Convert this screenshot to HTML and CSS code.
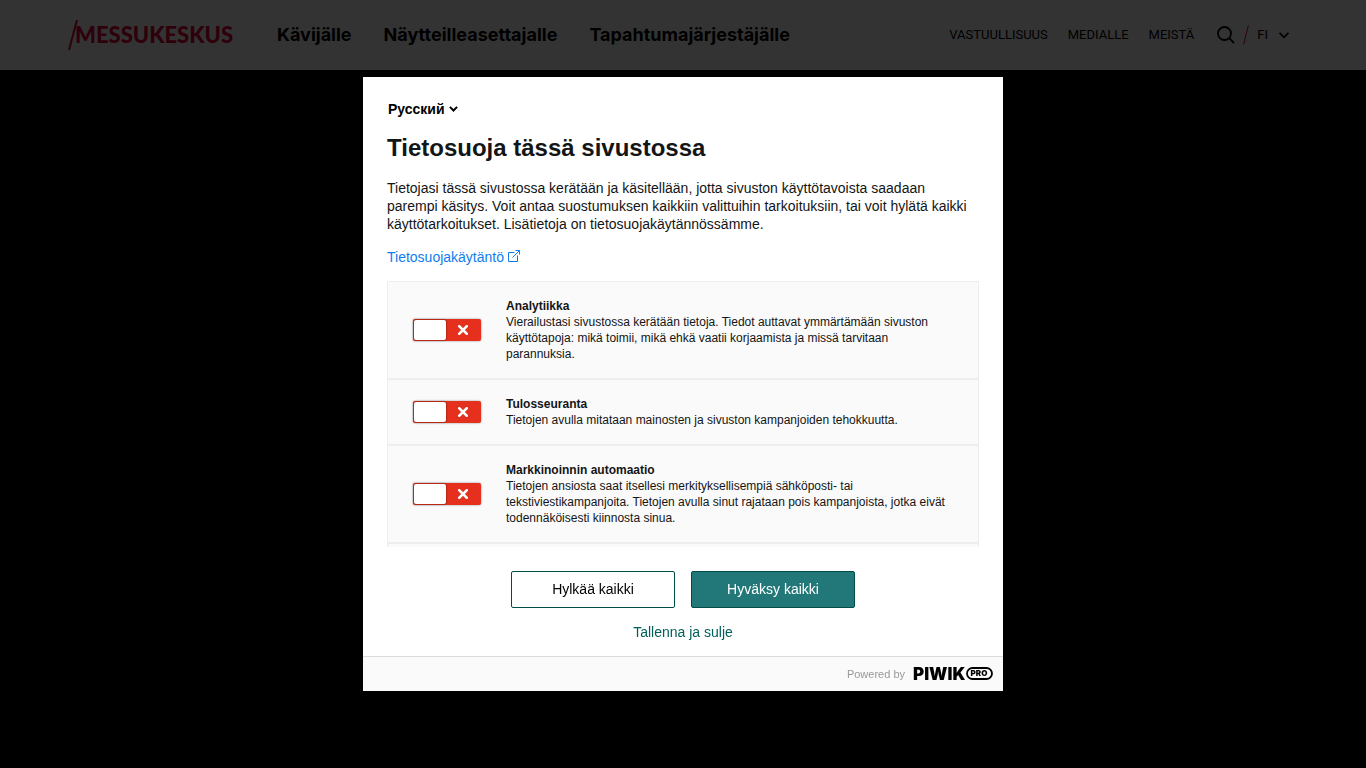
FILE: index.html
```
<!DOCTYPE html>
<html lang="fi">
<head>
    <meta charset="UTF-8">
    <meta name="viewport" content="width=device-width, initial-scale=1.0">
    <title>Messukeskus</title>
    <link rel="stylesheet" href="styles.css">
</head>
<body>

<header class="site-header">
    <a class="logo" href="#" aria-label="Messukeskus">
        <svg width="170" height="32" viewBox="0 0 170 32">
            <path d="M1 31 L9 1" stroke="currentColor" stroke-width="2" fill="none"/>
            <text class="logo-text" x="7" y="24">MESSUKESKUS</text>
        </svg>
    </a>
    <nav class="main-nav">
        <a href="#">Kävijälle</a>
        <a href="#">Näytteilleasettajalle</a>
        <a href="#">Tapahtumajärjestäjälle</a>
    </nav>
    <nav class="side-nav">
        <a href="#">VASTUULLISUUS</a>
        <a href="#">MEDIALLE</a>
        <a href="#">MEISTÄ</a>
    </nav>
    <div class="header-tools">
        <button class="icon-button" aria-label="Haku">
            <svg width="18" height="18" viewBox="0 0 18 18" fill="none" stroke="currentColor" stroke-width="1.8">
                <circle cx="7.5" cy="7.5" r="6.5"/>
                <path d="M12.2 12.2 L17 17"/>
            </svg>
        </button>
        <svg class="slash" width="6" height="20" viewBox="0 0 6 20" fill="none" stroke="currentColor">
            <path d="M0.7 19.5 L5.3 0.5"/>
        </svg>
        <button class="lang-button">
            FI
            <svg width="10" height="7" viewBox="0 0 10 7" fill="none" stroke="currentColor" stroke-width="1.7">
                <path d="M0.6 0.9 L5 5.3 L9.4 0.9"/>
            </svg>
        </button>
    </div>
</header>

<div class="overlay">
    <div class="dialog" role="dialog" aria-labelledby="dialog-title">
        <div class="dialog-body">
            <div class="language">
                <select aria-label="Kieli">
                    <option>Русский</option>
                </select>
                <svg width="9" height="6" viewBox="0 0 9 6" fill="none" stroke="currentColor" stroke-width="2">
                    <path d="M0.9 0.9 L4.5 4.5 L8.1 0.9"/>
                </svg>
            </div>
            <h1 id="dialog-title">Tietosuoja tässä sivustossa</h1>
            <p class="intro">Tietojasi tässä sivustossa kerätään ja käsitellään, jotta sivuston käyttötavoista saadaan parempi käsitys. Voit antaa suostumuksen kaikkiin valittuihin tarkoituksiin, tai voit hylätä kaikki käyttötarkoitukset. Lisätietoja on tietosuojakäytännössämme.</p>
            <a class="policy-link" href="#">Tietosuojakäytäntö
                <svg width="12" height="12" viewBox="0 0 12 12" fill="none" stroke="currentColor">
                    <path d="M6.5 2.5 H0.5 V11.5 H9.5 V5.5"/>
                    <path d="M4.5 7.5 L11.3 0.7 M7.5 0.5 H11.5 V4.5"/>
                </svg>
            </a>
            <ul class="consents">
                <li>
                    <input class="toggle" type="checkbox" id="analytics">
                    <label for="analytics"><strong>Analytiikka</strong> Vierailustasi sivustossa kerätään tietoja. Tiedot auttavat ymmärtämään sivuston käyttötapoja: mikä toimii, mikä ehkä vaatii korjaamista ja missä tarvitaan parannuksia.</label>
                </li>
                <li>
                    <input class="toggle" type="checkbox" id="conversion">
                    <label for="conversion"><strong>Tulosseuranta</strong> Tietojen avulla mitataan mainosten ja sivuston kampanjoiden tehokkuutta.</label>
                </li>
                <li>
                    <input class="toggle" type="checkbox" id="marketing">
                    <label for="marketing"><strong>Markkinoinnin automaatio</strong> Tietojen ansiosta saat itsellesi merkityksellisempiä sähköposti- tai tekstiviestikampanjoita. Tietojen avulla sinut rajataan pois kampanjoista, jotka eivät todennäköisesti kiinnosta sinua.</label>
                </li>
                <li></li>
            </ul>
        </div>

        <div class="actions">
            <div class="buttons">
                <button class="btn">Hylkää kaikki</button>
                <button class="btn btn-primary">Hyväksy kaikki</button>
            </div>
            <button class="btn-link">Tallenna ja sulje</button>
        </div>

        <footer class="dialog-footer">
            <span>Powered by</span>
            <a href="#" aria-label="Piwik PRO">
                <svg width="80" height="24" viewBox="0 0 80 24">
                    <text class="piwik" x="0" y="18">PIWIK</text>
                    <rect x="54" y="6" width="25" height="11" rx="5.5" fill="none" stroke="#000" stroke-width="1.8"/>
                    <text class="pro" x="66" y="14" text-anchor="middle">PRO</text>
                </svg>
            </a>
        </footer>
    </div>
</div>

</body>
</html>
```

FILE: styles.css
```
* {
    box-sizing: border-box;
}

body {
    margin: 0;
    background-color: #000;
    font-family: "Liberation Sans", Arial, sans-serif;
    font-size: 14px;
    line-height: 18px;
    color: #131516;
}

a {
    text-decoration: none;
    color: inherit;
}

button {
    font: inherit;
    color: inherit;
    cursor: pointer;
}

svg {
    display: block;
}

/* Header */
.site-header {
    display: flex;
    align-items: center;
    height: 70px;
    padding: 0 77px 0 68px;
    background-color: #fff;
    color: #000;
    font-family: Roboto, sans-serif;
}

.logo {
    color: #e4003a;
}

.logo-text {
    fill: currentColor;
    font-family: Lato, sans-serif;
    font-size: 22px;
    font-weight: 900;
}

.main-nav {
    display: flex;
    gap: 32px;
    margin-left: 39px;
    font-family: Inter, sans-serif;
    font-size: 18px;
    font-weight: 700;
}

.side-nav {
    display: flex;
    gap: 20px;
    margin-left: auto;
    font-size: 13px;
}

.header-tools {
    display: flex;
    align-items: center;
    gap: 8px;
    margin-left: 23px;
}

.icon-button,
.lang-button {
    padding: 0;
    border: none;
    background: none;
}

.lang-button {
    display: flex;
    align-items: center;
    gap: 11px;
    font-size: 13px;
}

.slash {
    color: #e4003a;
}

/* Cookie dialog */
.overlay {
    position: fixed;
    inset: 0;
    display: flex;
    align-items: center;
    justify-content: center;
    background-color: rgba(0, 0, 0, 0.8);
}

.dialog {
    display: flex;
    flex-direction: column;
    width: 100%;
    max-width: 640px;
    max-height: 80vh;
    background-color: #fff;
}

.dialog-body {
    flex: 1;
    min-height: 0;
    padding: 24px 24px 0;
    overflow-y: auto;
    scrollbar-width: none;
}

.language {
    display: flex;
    align-items: center;
    gap: 4px;
    height: 16px;
    padding-left: 1px;
    color: #000;
}

.language select {
    appearance: none;
    padding: 0;
    border: none;
    background: none;
    font: inherit;
    font-weight: bold;
    color: inherit;
}

h1 {
    margin: 16px 0;
    font-size: 24px;
    line-height: 30px;
}

.intro {
    margin: 0 0 15px;
}

.policy-link {
    display: flex;
    gap: 4px;
    color: #0f7ded;
}

.policy-link svg {
    margin-top: 2px;
}

.consents {
    margin: 15px 0 0;
    padding: 0;
    list-style: none;
    font-size: 12px;
    line-height: 16px;
}

.consents li {
    display: flex;
    align-items: center;
    gap: 25px;
    min-height: 66px;
    padding: 16px 24px 16px 25px;
    border: 1px solid #eee;
    background-color: #fafafa;
}

.consents strong {
    display: block;
}

/* Toggle switch */
.toggle {
    appearance: none;
    display: flex;
    flex-shrink: 0;
    align-items: center;
    width: 68px;
    height: 22px;
    margin: 0;
    padding: 1px;
    border-radius: 2px;
    background-color: #e4301c;
    box-shadow: 0 0 2px rgba(0, 0, 0, 0.5);
    cursor: pointer;
}

.toggle::before {
    content: "";
    width: 32px;
    height: 20px;
    border-radius: 2px;
    background-color: #fff;
    box-shadow: 0 0 2px rgba(0, 0, 0, 0.7);
}

/* White cross on the off side */
.toggle::after {
    content: "";
    width: 10px;
    height: 10px;
    margin-left: 12px;
    border-radius: 1px;
    background:
        linear-gradient(45deg, transparent 39%, #fff 42%, #fff 58%, transparent 61%),
        linear-gradient(-45deg, transparent 39%, #fff 42%, #fff 58%, transparent 61%);
}

.toggle:checked {
    flex-direction: row-reverse;
    background-color: #227878;
}

.toggle:checked::after {
    visibility: hidden;
}

/* Buttons */
.actions {
    display: flex;
    flex-direction: column;
    flex-shrink: 0;
    align-items: center;
    gap: 15px;
    padding: 24px 24px 15px;
}

.buttons {
    display: flex;
    gap: 16px;
}

.btn {
    width: 164px;
    height: 37px;
    padding: 0 8px 2px;
    border: 1px solid #004c46;
    border-radius: 2px;
    background-color: #fff;
    color: #000;
}

.btn-primary {
    background-color: #227878;
    color: #fff;
}

.btn-link {
    padding: 0;
    border: none;
    background: none;
    color: #00605a;
}

.dialog-footer {
    display: flex;
    flex-shrink: 0;
    align-items: center;
    justify-content: flex-end;
    gap: 8px;
    height: 35px;
    padding: 0 10px;
    border-top: 1px solid #dcdcdc;
    background-color: #fafafa;
    font-size: 11px;
    color: #999;
}

.piwik,
.pro {
    font-family: Inter, sans-serif;
    font-weight: 900;
    fill: #000;
}

.piwik {
    font-size: 17px;
}

.pro {
    font-size: 8px;
}
```
